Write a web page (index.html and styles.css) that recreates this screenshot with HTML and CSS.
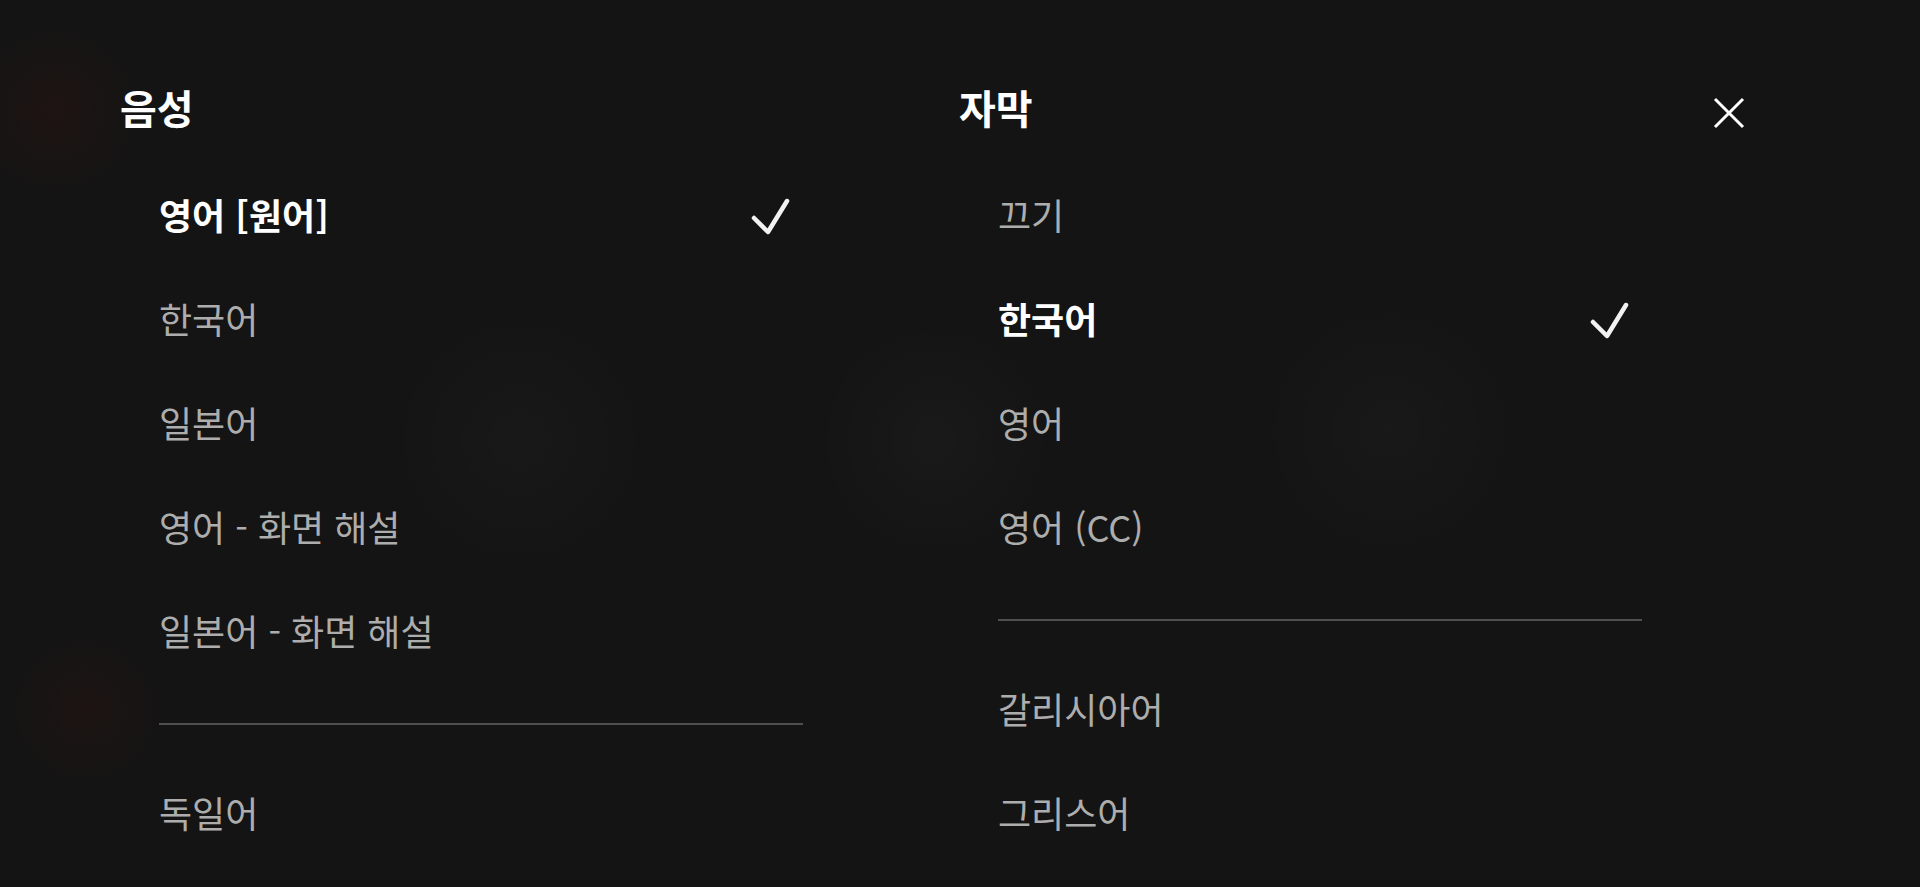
FILE: index.html
```html
<!DOCTYPE html>
<html lang="ko">
	<head>
	<title>음성 및 자막</title>
	<meta charset="utf-8">

	<link rel="stylesheet" href="styles.css">
	</head>

	<body>
	<div id="dialogo">

		<!-- columna de audio -->
		<div class="columna">
			<div class="cabecera">
				<h2>음성</h2>
			</div>
			<ul class="lista">
				<li class="opcion elegida">영어 [원어]
					<svg class="check" width="40" height="40" viewBox="0 0 40 40"><path d="M3 21 L17 35 L36 4"/></svg>
				</li>
				<li class="opcion">한국어</li>
				<li class="opcion">일본어</li>
				<li class="opcion">영어 - 화면 해설</li>
				<li class="opcion">일본어 - 화면 해설</li>
				<li class="separador"></li>
				<li class="opcion">독일어</li>
			</ul>
		</div>

		<!-- columna de subtitulos -->
		<div class="columna">
			<div class="cabecera">
				<h2>자막</h2>
				<button class="cerrar" aria-label="닫기">
					<svg width="32" height="32" viewBox="0 0 32 32"><path d="M2 2 L30 30 M30 2 L2 30"/></svg>
				</button>
			</div>
			<ul class="lista">
				<li class="opcion">끄기</li>
				<li class="opcion elegida">한국어
					<svg class="check" width="40" height="40" viewBox="0 0 40 40"><path d="M3 21 L17 35 L36 4"/></svg>
				</li>
				<li class="opcion">영어</li>
				<li class="opcion">영어 (CC)</li>
				<li class="separador"></li>
				<li class="opcion">갈리시아어</li>
				<li class="opcion">그리스어</li>
			</ul>
		</div>

	</div>
	</body>
</html>
```

FILE: styles.css
```css
html, body
{
height: 100%;
}

body
{
margin: 0;
overflow: hidden;
font-family: "Noto Sans CJK KR", "Noto Sans", sans-serif;
color: #adadad;
background-color: #141414;
background-image:
	radial-gradient(circle at 55px 110px, rgba(70, 22, 14, 0.2), rgba(70, 22, 14, 0) 90px),
	radial-gradient(circle at 85px 710px, rgba(70, 22, 14, 0.18), rgba(70, 22, 14, 0) 80px),
	radial-gradient(circle at 520px 440px, rgba(255, 255, 255, 0.02), rgba(255, 255, 255, 0) 130px),
	radial-gradient(circle at 935px 440px, rgba(255, 255, 255, 0.025), rgba(255, 255, 255, 0) 120px),
	radial-gradient(circle at 1390px 430px, rgba(255, 255, 255, 0.02), rgba(255, 255, 255, 0) 130px);
}

#dialogo
{
display: grid;
grid-template-columns: 839px 784px;
padding: 77px 0 0 120px;
}

.cabecera
{
display: flex;
align-items: center;
justify-content: space-between;
height: 60px;
}

.cabecera h2
{
margin: 0;
font-size: 40px;
font-weight: 700;
color: #fff;
line-height: 60px;
}

.cerrar
{
display: flex;
padding: 0;
margin: 11px -2px 0 0;
border: none;
background: none;
cursor: pointer;
}

.cerrar path
{
stroke: #fff;
stroke-width: 3;
fill: none;
}

.lista
{
list-style: none;
margin: 28px 0 0 39px;
padding: 0;
width: 644px;
}

.opcion
{
display: flex;
align-items: center;
justify-content: space-between;
box-sizing: border-box;
height: 104px;
padding: 0 12px 7px 0;
font-size: 36px;
cursor: pointer;
}

.elegida
{
color: #fff;
font-weight: 700;
}

.check
{
margin-top: 7px;
}

.check path
{
stroke: #f2f2f2;
stroke-width: 4.5;
stroke-linecap: round;
stroke-linejoin: round;
fill: none;
}

.separador
{
height: 2px;
margin: 38px 0;
background: #4f4f4f;
}
```
